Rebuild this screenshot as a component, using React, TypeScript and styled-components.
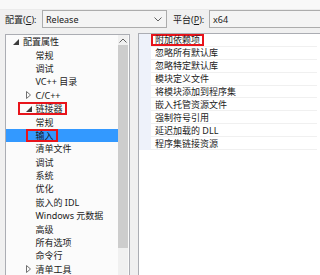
import styled, { createGlobalStyle } from "styled-components";

const GlobalStyle = createGlobalStyle`
  html, body {
    margin: 0;
    padding: 0;
    background: #f0f0f0;
    overflow: hidden;
  }
  body {
    font-family: "Noto Sans", "Noto Sans CJK SC", sans-serif;
    font-size: 9px;
    color: #1a1a1a;
  }
`;

const Page = styled.div`
  width: 320px;
  height: 275px;
  overflow: hidden;
  display: flex;
  flex-direction: column;
`;

const TopStrip = styled.div`
  height: 9px;
  background: #f8f8f8;
  border-bottom: 1px solid #ebebeb;
  flex-shrink: 0;
`;

const Toolbar = styled.div`
  display: flex;
  align-items: center;
  height: 18px;
  padding-left: 5px;
  margin-bottom: 6px;
  flex-shrink: 0;
`;

const Label = styled.span<{ $w: number }>`
  width: ${(p) => p.$w}px;
  flex-shrink: 0;
  white-space: nowrap;
  u {
    text-decoration: underline;
  }
`;

const Combo = styled.div<{ $w: number }>`
  width: ${(p) => p.$w}px;
  height: 18px;
  box-sizing: border-box;
  flex-shrink: 0;
  border: 1px solid #acacac;
  background: #f4f4f4;
  display: flex;
  align-items: center;
  justify-content: space-between;
  padding: 0 4px 0 3px;
  margin-right: 6px;
`;

const Body = styled.div`
  flex: 1;
  display: flex;
  gap: 8px;
  padding-left: 5px;
  min-height: 0;
`;

const TreePanel = styled.div`
  width: 125px;
  flex-shrink: 0;
  height: 250px;
  box-sizing: border-box;
  border: 1px solid #abadb3;
  background: #fbfbfb;
  display: flex;
`;

const Tree = styled.div`
  flex: 1;
  display: flex;
  flex-direction: column;
`;

const TreeRow = styled.div<{ $level: number; $selected?: boolean }>`
  height: 13.4px;
  flex-shrink: 0;
  display: flex;
  align-items: center;
  padding-left: ${(p) => 5 + p.$level * 12.5}px;
  background: ${(p) => (p.$selected ? "#3399ff" : "transparent")};
  white-space: nowrap;
`;

const Slot = styled.span`
  width: 12px;
  flex-shrink: 0;
  display: flex;
  align-items: center;
  padding-left: 2px;
  box-sizing: border-box;
`;

const Marked = styled.span<{ $pad: number; $h: number }>`
  display: inline-flex;
  align-items: center;
  box-sizing: border-box;
  height: ${(p) => p.$h}px;
  border: 2px solid #e8141b;
  padding: 0 2px 0 ${(p) => p.$pad}px;
  margin-left: ${(p) => -(p.$pad + 2)}px;
`;

const ScrollBar = styled.div`
  width: 10px;
  margin-right: 1px;
  background: #f0f0f0;
  display: flex;
  flex-direction: column;
`;

const ScrollArrow = styled.div`
  height: 10px;
  display: flex;
  align-items: center;
  justify-content: center;
`;

const Thumb = styled.div`
  height: 203px;
  background: #cdcdcd;
`;

const GridPanel = styled.div`
  flex: 1;
  height: 250px;
  margin-top: -1px;
  border-top: 1px solid #abadb3;
  border-left: 1px solid #abadb3;
  background: #ffffff;
  display: flex;
  flex-direction: column;
`;

const GridRow = styled.div`
  height: 12.9px;
  flex-shrink: 0;
  display: flex;
  box-sizing: border-box;
`;

const Margin = styled.div`
  width: 12px;
  flex-shrink: 0;
  background: #eef2fa;
`;

const Cell = styled.div`
  flex: 1;
  margin-right: 3px;
  display: flex;
  align-items: center;
  padding-left: 4px;
  border-bottom: 1px solid #f0f0f0;
  white-space: nowrap;
`;

const Expanded = () => (
  <svg width="6" height="6" viewBox="0 0 6 6">
    <polygon points="6,0 6,6 0,6" fill="#3c3c3c" />
  </svg>
);

const Collapsed = () => (
  <svg width="5" height="8" viewBox="0 0 5 8">
    <polygon points="0.5,0.5 4.5,4 0.5,7.5" fill="none" stroke="#707070" strokeWidth="1" />
  </svg>
);

const Chevron = ({ up }: { up?: boolean }) => (
  <svg width="8" height="5" viewBox="0 0 8 5">
    <polyline
      points={up ? "0.5,4.5 4,1 7.5,4.5" : "0.5,0.5 4,4 7.5,0.5"}
      fill="none"
      stroke="#606060"
      strokeWidth="1"
    />
  </svg>
);

type Node = {
  label: string;
  level: number;
  arrow?: "open" | "closed";
  selected?: boolean;
  mark?: number;
};

const nodes: Node[] = [
  { label: "配置属性", level: 0, arrow: "open" },
  { label: "常规", level: 1 },
  { label: "调试", level: 1 },
  { label: "VC++ 目录", level: 1 },
  { label: "C/C++", level: 1, arrow: "closed" },
  { label: "链接器", level: 1, arrow: "open", mark: 4 },
  { label: "常规", level: 2 },
  { label: "输入", level: 2, selected: true, mark: 8 },
  { label: "清单文件", level: 2 },
  { label: "调试", level: 2 },
  { label: "系统", level: 2 },
  { label: "优化", level: 2 },
  { label: "嵌入的 IDL", level: 2 },
  { label: "Windows 元数据", level: 2 },
  { label: "高级", level: 2 },
  { label: "所有选项", level: 2 },
  { label: "命令行", level: 2 },
  { label: "清单工具", level: 1, arrow: "closed" },
];

const properties = [
  "附加依赖项",
  "忽略所有默认库",
  "忽略特定默认库",
  "模块定义文件",
  "将模块添加到程序集",
  "嵌入托管资源文件",
  "强制符号引用",
  "延迟加载的 DLL",
  "程序集链接资源",
];

function TreeItem({ node }: { node: Node }) {
  const hasSlot = node.level < 2;
  const content = (
    <>
      {hasSlot && (
        <Slot>
          {node.arrow === "open" && <Expanded />}
          {node.arrow === "closed" && <Collapsed />}
        </Slot>
      )}
      <span>{node.label}</span>
    </>
  );
  return (
    <TreeRow $level={hasSlot ? node.level : 1} $selected={node.selected}>
      {!hasSlot && <Slot />}
      {node.mark ? (
        <Marked $pad={node.mark} $h={13}>
          {content}
        </Marked>
      ) : (
        content
      )}
    </TreeRow>
  );
}

export default function App() {
  return (
    <Page>
      <GlobalStyle />
      <TopStrip />
      <Toolbar>
        <Label $w={37}>
          配置(<u>C</u>):
        </Label>
        <Combo $w={125}>
          <span>Release</span>
          <Chevron />
        </Combo>
        <Label $w={36}>
          平台(<u>P</u>):
        </Label>
        <Combo $w={130}>
          <span>x64</span>
        </Combo>
      </Toolbar>
      <Body>
        <TreePanel>
          <Tree>
            {nodes.map((n, i) => (
              <TreeItem key={i} node={n} />
            ))}
          </Tree>
          <ScrollBar>
            <ScrollArrow>
              <Chevron up />
            </ScrollArrow>
            <Thumb />
          </ScrollBar>
        </TreePanel>
        <GridPanel>
          {properties.map((p, i) => (
            <GridRow key={p}>
              <Margin />
              <Cell>
                {i === 0 ? (
                  <Marked $pad={2} $h={12.9}>
                    {p}
                  </Marked>
                ) : (
                  p
                )}
              </Cell>
            </GridRow>
          ))}
        </GridPanel>
      </Body>
    </Page>
  );
}
